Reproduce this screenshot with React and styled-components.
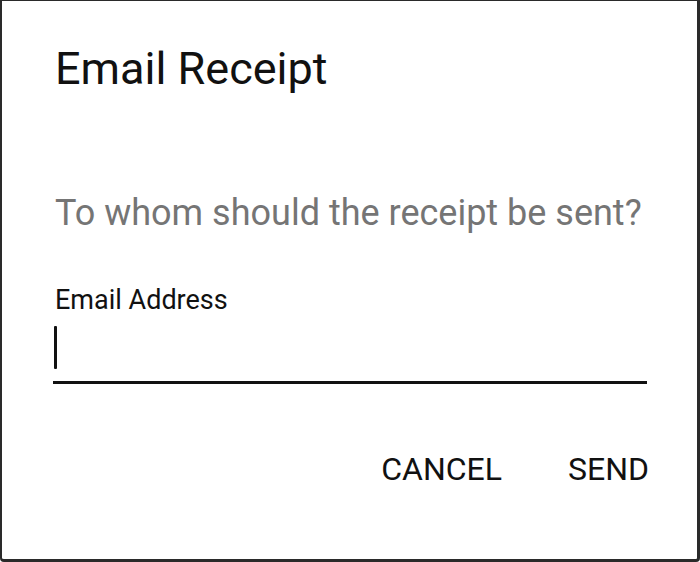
import React from "react"
import styled, { createGlobalStyle } from "styled-components"

const GlobalStyle = createGlobalStyle`
  html, body {
    margin: 0;
    padding: 0;
    background: #ffffff;
  }
  body {
    font-family: Roboto, "Liberation Sans", sans-serif;
  }
`

const Dialog = styled.div`
  box-sizing: border-box;
  width: 700px;
  height: 562px;
  border-top: 1px solid #2a2a2a;
  border-left: 2px solid #2a2a2a;
  border-right: 3px solid #2a2a2a;
  border-bottom: 3px solid #2a2a2a;
  border-radius: 0 0 4px 4px;
  padding: 42px 50px 0 51px;
  display: flex;
  flex-direction: column;
  color: #111;
`

const Title = styled.h1`
  margin: 0 0 0 2px;
  font-weight: 400;
  font-size: 45px;
  line-height: 52px;
`

const Question = styled.p`
  margin: 97px 0 0 2px;
  font-size: 36px;
  line-height: 42px;
  color: #757575;
`

const Field = styled.label`
  display: flex;
  flex-direction: column;
  margin-top: 50px;
`

const Label = styled.span`
  margin-left: 2px;
  font-size: 27px;
  line-height: 32px;
  color: #111;
`

const Input = styled.div`
  box-sizing: border-box;
  height: 68px;
  padding-top: 10px;
  border-bottom: 3px solid #111;
  display: flex;
  align-items: flex-start;
`

const Caret = styled.span`
  width: 3px;
  height: 43px;
  margin-left: 1px;
  background: #111;
  border-radius: 1px;
`

const Actions = styled.div`
  display: flex;
  justify-content: flex-end;
  gap: 66px;
  margin: 65px -2px 0 0;
`

const Button = styled.button`
  background: none;
  border: none;
  padding: 0;
  font-family: Roboto, "Liberation Sans", sans-serif;
  font-size: 32px;
  line-height: 40px;
  color: #111;
  text-transform: uppercase;
  cursor: pointer;
`

export default function App() {
  return (
    <>
      <GlobalStyle />
      <Dialog>
        <Title>Email Receipt</Title>
        <Question>To whom should the receipt be sent?</Question>
        <Field>
          <Label>Email Address</Label>
          <Input>
            <Caret />
          </Input>
        </Field>
        <Actions>
          <Button>Cancel</Button>
          <Button>Send</Button>
        </Actions>
      </Dialog>
    </>
  )
}
